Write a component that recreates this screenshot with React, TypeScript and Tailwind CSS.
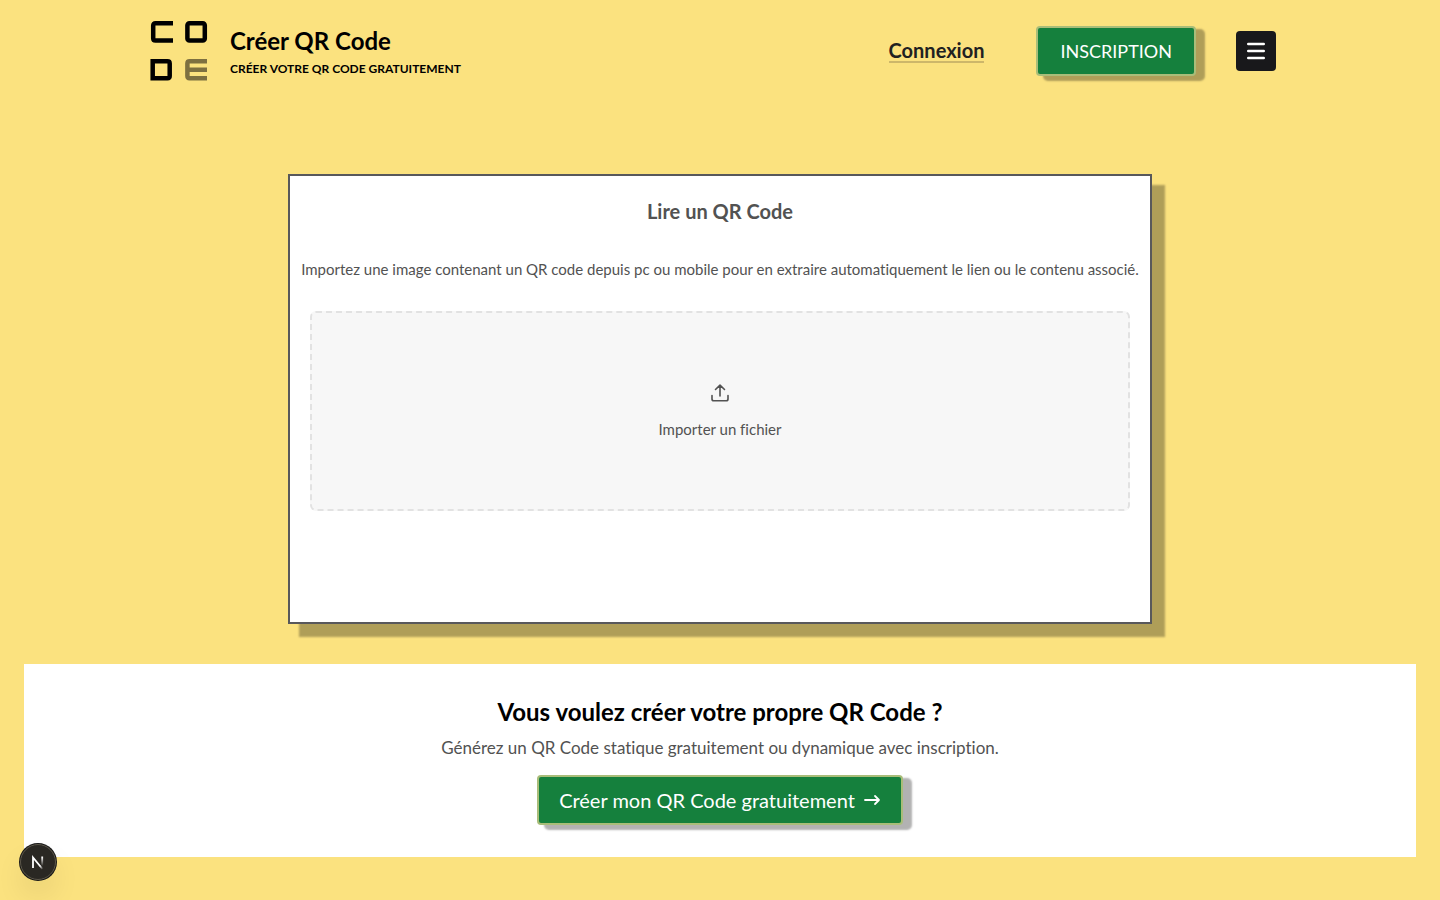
import React from 'react';

function Logo() {
  return (
    <svg className="h-[62px] w-[60px] shrink-0" viewBox="0 0 60 62" fill="none" strokeWidth="4.500" aria-hidden="true">
      <path d="M23 3.200H5.500Q3.200 3.200 3.200 5.500V18.300Q3.200 20.600 5.500 20.600H23" stroke="#000" />
      <rect x="37.400" y="3.200" width="17.400" height="17.400" rx="2" stroke="#000" />
      <path d="M2.700 41.200H17.500Q19.700 41.200 19.700 43.400V56Q19.700 58.200 17.500 58.200H2.700Z" stroke="#000" />
      <path d="M57 41.200H39.600Q37.400 41.200 37.400 43.400V56Q37.400 58.200 39.600 58.200H57M37.400 49.700H57" stroke="#7d7040" />
    </svg>
  );
}

function Header() {
  return (
    <header className="mx-auto flex w-full max-w-[1140px] items-center justify-between pt-5 pr-[14px]">
      <a href="#" className="flex items-center gap-5 text-black">
        <Logo />
        <span className="flex flex-col pt-1">
          <span className="text-2xl leading-8 font-bold">Créer QR Code</span>
          <span className="text-xs leading-6 font-bold">CRÉER VOTRE QR CODE GRATUITEMENT</span>
        </span>
      </a>
      <nav className="flex items-center">
        <a href="#" className="mr-[52px] border-b-2 border-[#cdb76a] text-xl leading-[22px] font-bold text-[#212121]">
          Connexion
        </a>
        <button
          type="button"
          className="mr-10 h-[50px] rounded border-2 border-[#a9bd79] bg-[#15803d] px-[22px] text-lg text-white shadow-[8px_4px_2px_1px_rgba(0,0,0,0.3)]"
        >
          INSCRIPTION
        </button>
        <button type="button" aria-label="Menu" className="flex size-10 items-center justify-center rounded bg-[#18181b]">
          <svg className="size-5" viewBox="0 0 20 20" stroke="#fff" strokeWidth="2.400" strokeLinecap="round" aria-hidden="true">
            <path d="M2.200 3H17.800M2.200 10H17.800M2.200 17H17.800" />
          </svg>
        </button>
      </nav>
    </header>
  );
}

function Reader() {
  return (
    <section className="mx-auto mt-[92px] flex min-h-[450px] w-3/5 flex-col border-2 border-[#58585b] bg-white px-5 pt-[19px] text-center text-[#525252] shadow-[12px_12px_2px_1px_rgba(0,0,0,0.3)]">
      <h1 className="text-xl leading-8 font-bold">Lire un QR Code</h1>
      <p className="-mx-4 mt-8 text-[15px] leading-5">
        Importez une image contenant un QR code depuis pc ou mobile pour en extraire automatiquement le lien ou le contenu associé.
      </p>
      <button
        type="button"
        className="mt-8 flex h-[200px] flex-col items-center justify-center gap-4 rounded-md border-2 border-dashed border-[#e2e2e2] bg-[#f7f7f7] text-[15px] leading-5"
      >
        <svg
          className="size-5"
          viewBox="0 0 20 20"
          fill="none"
          stroke="currentColor"
          strokeWidth="1.600"
          strokeLinecap="round"
          strokeLinejoin="round"
          aria-hidden="true"
        >
          <path d="M10 13V2.500M5.500 6.500L10 2.200L14.500 6.500M2 12.500V16Q2 17.800 3.800 17.800H16.200Q18 17.800 18 16V12.500" />
        </svg>
        Importer un fichier
      </button>
    </section>
  );
}

function Promo() {
  return (
    <section className="mx-6 mt-10 flex flex-col items-center bg-white py-8 text-center">
      <h2 className="text-2xl leading-8 font-bold text-black">Vous voulez créer votre propre QR Code ?</h2>
      <p className="mt-2 text-[17px] leading-6 text-[#525252]">
        Générez un QR Code statique gratuitement ou dynamique avec inscription.
      </p>
      <button
        type="button"
        className="mt-[15px] flex h-[50px] items-center gap-2 rounded border-2 border-[#a9bd79] bg-[#15803d] px-5 text-xl text-white shadow-[8px_4px_2px_1px_rgba(0,0,0,0.3)]"
      >
        Créer mon QR Code gratuitement
        <svg
          className="h-5 w-[18px]"
          viewBox="0 0 18 20"
          fill="none"
          stroke="currentColor"
          strokeWidth="1.800"
          strokeLinecap="round"
          strokeLinejoin="round"
          aria-hidden="true"
        >
          <path d="M2 10H16M12 6L16 10L12 14" />
        </svg>
      </button>
    </section>
  );
}

function DevBadge() {
  return (
    <button
      type="button"
      aria-label="Next.js"
      className="fixed bottom-5 left-5 flex size-9 items-center justify-center rounded-full border border-[#5c574a] bg-[#2a2823] shadow-[0_0_0_1px_#171717,0_16px_32px_-8px_rgba(0,0,0,0.24)]"
    >
      <svg className="size-4" viewBox="0 0 16 16" fill="none" strokeWidth="1.800" aria-hidden="true">
        <defs>
          <linearGradient id="diagonal" x1="6" y1="7" x2="13" y2="15" gradientUnits="userSpaceOnUse">
            <stop stopColor="#fff" />
            <stop offset="0.600" stopColor="#fff" />
            <stop offset="1" stopColor="#fff" stopOpacity="0" />
          </linearGradient>
          <linearGradient id="stem" x1="12" y1="3" x2="12" y2="12" gradientUnits="userSpaceOnUse">
            <stop stopColor="#fff" />
            <stop offset="1" stopColor="#fff" stopOpacity="0" />
          </linearGradient>
        </defs>
        <path d="M3 14V3.500L12.500 15" stroke="url(#diagonal)" />
        <rect x="11.300" y="2.500" width="1.800" height="10" fill="url(#stem)" />
      </svg>
    </button>
  );
}

export default function App() {
  return (
    <div className="min-h-screen bg-[#fbe27f] pb-10 font-['Lato','Liberation_Sans',sans-serif] [font-variant-ligatures:none]">
      <Header />
      <main>
        <Reader />
        <Promo />
      </main>
      <DevBadge />
    </div>
  );
}
